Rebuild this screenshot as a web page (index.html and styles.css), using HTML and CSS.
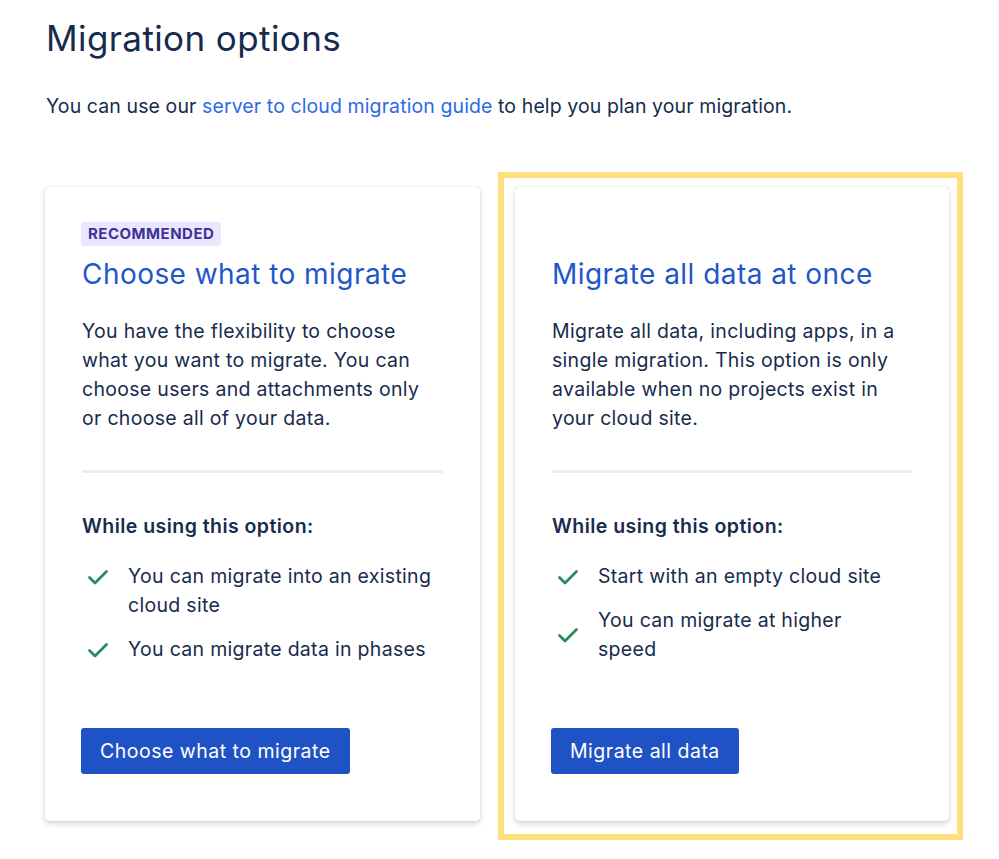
FILE: index.html
```html
<!DOCTYPE html>
<html lang="en">
<head>
<meta charset="utf-8">
<title>Migration options</title>
<link rel="stylesheet" href="styles.css">
</head>
<body>
<main class="page">
  <h1 class="page-title">Migration options</h1>
  <p class="intro">You can use our <a href="#" class="link">server to cloud migration guide</a> to help you plan your migration.</p>

  <div class="options">
    <section class="card">
      <span class="badge">Recommended</span>
      <h2 class="card-title">Choose what to migrate</h2>
      <p class="card-text">You have the flexibility to choose what you want to migrate. You can choose users and attachments only or choose all of your data.</p>
      <hr class="divider">
      <h3 class="list-heading">While using this option:</h3>
      <ul class="checklist">
        <li class="check-item">
          <svg class="check" viewBox="0 0 24 24" aria-hidden="true"><path d="M3.5 12.5l5.5 5.5L20.5 6.5" fill="none" stroke="currentColor" stroke-width="2.8" stroke-linecap="round" stroke-linejoin="round"/></svg>
          <span>You can migrate into an existing cloud site</span>
        </li>
        <li class="check-item">
          <svg class="check" viewBox="0 0 24 24" aria-hidden="true"><path d="M3.5 12.5l5.5 5.5L20.5 6.5" fill="none" stroke="currentColor" stroke-width="2.8" stroke-linecap="round" stroke-linejoin="round"/></svg>
          <span>You can migrate data in phases</span>
        </li>
      </ul>
      <div class="card-actions">
        <button class="btn-primary" type="button">Choose what to migrate</button>
      </div>
    </section>

    <section class="card card-highlighted">
      <span class="badge badge-placeholder" aria-hidden="true">Recommended</span>
      <h2 class="card-title">Migrate all data at once</h2>
      <p class="card-text">Migrate all data, including apps, in a single migration. This option is only available when no projects exist in your cloud site.</p>
      <hr class="divider">
      <h3 class="list-heading">While using this option:</h3>
      <ul class="checklist">
        <li class="check-item">
          <svg class="check" viewBox="0 0 24 24" aria-hidden="true"><path d="M3.5 12.5l5.5 5.5L20.5 6.5" fill="none" stroke="currentColor" stroke-width="2.8" stroke-linecap="round" stroke-linejoin="round"/></svg>
          <span>Start with an empty cloud site</span>
        </li>
        <li class="check-item check-item-centered">
          <svg class="check" viewBox="0 0 24 24" aria-hidden="true"><path d="M3.5 12.5l5.5 5.5L20.5 6.5" fill="none" stroke="currentColor" stroke-width="2.8" stroke-linecap="round" stroke-linejoin="round"/></svg>
          <span>You can migrate at higher<br>speed</span>
        </li>
      </ul>
      <div class="card-actions">
        <button class="btn-primary" type="button">Migrate all data</button>
      </div>
    </section>
  </div>
</main>
</body>
</html>
```

FILE: styles.css
```css
* {
  box-sizing: border-box;
}

html, body {
  margin: 0;
  background: #ffffff;
}

body {
  font-family: Inter, "Noto Sans", "Liberation Sans", sans-serif;
  color: #172b4d;
}

.page {
  padding: 14px 0 0 46px;
}

.page-title {
  margin: 0;
  font-size: 35px;
  line-height: 48px;
  font-weight: 400;
  color: #172b4d;
  letter-spacing: 0.4px;
}

.intro {
  margin: 30px 0 0;
  font-size: 19.5px;
  line-height: 28px;
  letter-spacing: 0.1px;
}

.link {
  color: #2d6ae8;
  text-decoration: none;
}

.options {
  display: grid;
  grid-template-columns: 435px 434px;
  column-gap: 35px;
  margin: 67px 0 0 -1px;
  padding-bottom: 40px;
}

.card {
  position: relative;
  display: flex;
  flex-direction: column;
  align-items: flex-start;
  background: #ffffff;
  border-radius: 4px;
  padding: 35px 37px 47px 36px;
  box-shadow: 0 3px 6px -1px rgba(9, 30, 66, 0.22), 0 0 1px rgba(9, 30, 66, 0.31);
}

.card-highlighted::before {
  content: "";
  position: absolute;
  top: -15px;
  left: -17px;
  right: -14px;
  bottom: -19px;
  border: 6px solid #ffe07d;
  pointer-events: none;
}

.badge {
  display: inline-block;
  height: 24px;
  padding: 0 7px;
  border-radius: 3px;
  background: #eae6ff;
  color: #403294;
  font-size: 15px;
  line-height: 24px;
  font-weight: 700;
  text-transform: uppercase;
  letter-spacing: 0.5px;
}

.badge-placeholder {
  visibility: hidden;
}

.card-title {
  margin: 8px 0 0 1px;
  font-size: 28px;
  line-height: 40px;
  font-weight: 400;
  color: #1f57c9;
  letter-spacing: 0.45px;
}

.card-text {
  margin: 23px 0 0 1px;
  font-size: 19.5px;
  line-height: 29px;
  color: #172b4d;
  letter-spacing: 0.3px;
}

.divider {
  align-self: stretch;
  margin: 37px 0 0 1px;
  border: 0;
  height: 3px;
  background: #ebecf0;
}

.list-heading {
  margin: 39px 0 0 1px;
  font-size: 19.5px;
  line-height: 28px;
  font-weight: 600;
  color: #172b4d;
  letter-spacing: 0.45px;
}

.checklist {
  list-style: none;
  margin: 22px 0 0 1px;
  padding: 0;
}

.check-item {
  display: flex;
  align-items: flex-start;
  gap: 18px;
  font-size: 19.5px;
  line-height: 29px;
  margin-top: 15px;
  letter-spacing: 0.3px;
}

.check-item:first-child {
  margin-top: 0;
}

.check-item-centered {
  align-items: center;
}

.check {
  flex: none;
  width: 24px;
  height: 24px;
  margin: 3px 0 0 4px;
  color: #2a8a5c;
}

.check-item-centered .check {
  margin-top: 0;
}

.card-actions {
  margin-top: auto;
  padding-top: 64px;
}

.btn-primary {
  display: inline-block;
  height: 46px;
  padding: 0 19px;
  border: 0;
  border-radius: 3px;
  background: #1f52c4;
  color: #ffffff;
  font-family: inherit;
  font-size: 19.5px;
  font-weight: 400;
  line-height: 46px;
  letter-spacing: 0.5px;
  cursor: pointer;
}
```
